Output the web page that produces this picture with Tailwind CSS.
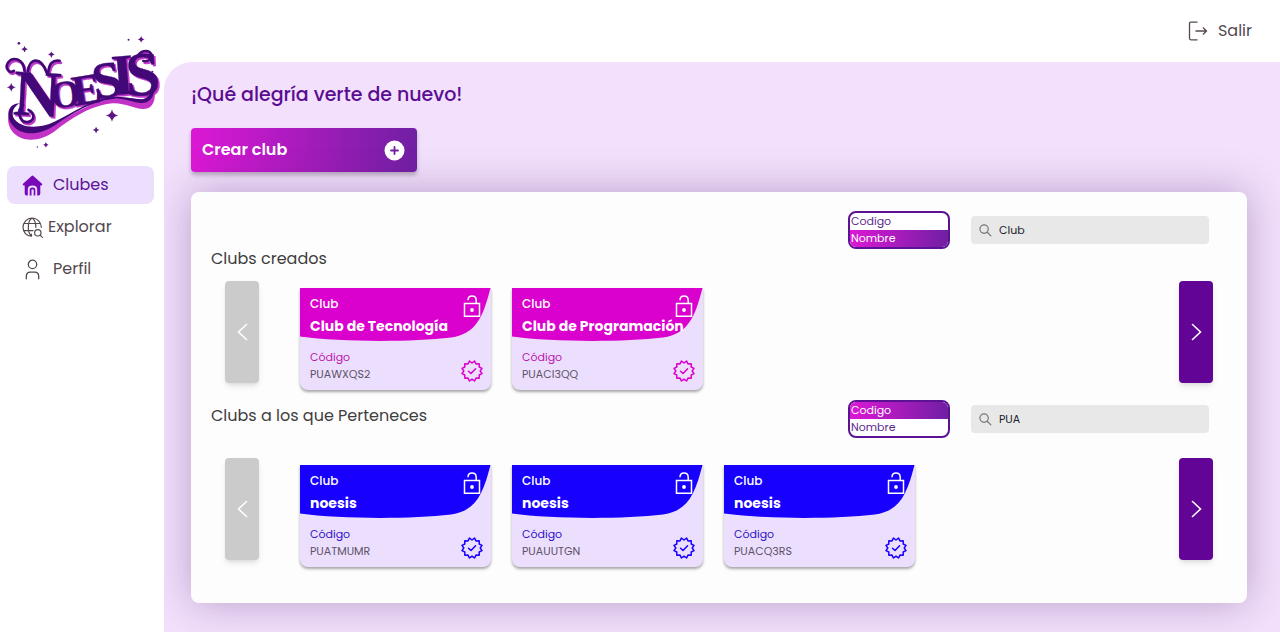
<!DOCTYPE html>
<html lang="es">
<head>
<meta charset="utf-8">
<meta name="viewport" content="width=device-width, initial-scale=1">
<title>Noesis - Clubes</title>
<script src="https://cdn.jsdelivr.net/npm/@tailwindcss/browser@4"></script>
</head>
<body class="flex min-h-screen bg-white font-['Poppins','Inter',sans-serif] text-[#54494f]">
<svg class="hidden" aria-hidden="true">
  <symbol id="lock" viewBox="0 0 18 24" fill="none" stroke="currentColor" stroke-width="1.5">
    <path d="M1.5 9.5H16.5V22.2H1.5ZM5 6.2C5 3.5 6.700 2 9 2S13.200 3.500 13.200 6.200V9.500"/>
    <circle cx="9" cy="16" r="1.900" fill="currentColor" stroke="none"/>
  </symbol>
  <symbol id="badge" viewBox="0 0 22 22" fill="none" stroke="currentColor" stroke-width="1.500" stroke-linejoin="round" stroke-linecap="round">
    <path d="M11 3 13.600 1 15 3.900 18.200 3.800 18.200 7 21 8.400 19.200 11 21 13.600 18.200 15 18.200 18.200 15 18.100 13.600 21 11 19.200 8.400 21 7 18.100 3.800 18.200 3.800 15 1 13.600 2.800 11 1 8.400 3.800 7 3.800 3.800 7 3.900 8.400 1Z"/>
    <path d="M7.500 11.200 10 13.500 14.600 8.800"/>
  </symbol>
  <symbol id="head" viewBox="0 0 191 53" preserveAspectRatio="none">
    <path fill="currentColor" d="M0 0H190.500C183 29 176 46 151 49.500C110 54.300 40 54 0 48.500Z"/>
  </symbol>
  <symbol id="search" viewBox="0 0 14 14" fill="none" stroke="currentColor" stroke-width="1.300" stroke-linecap="round">
    <circle cx="5.500" cy="5.500" r="4.500"/><path d="M8.900 8.900 12.800 12.800"/>
  </symbol>
  <symbol id="star" viewBox="-10 -10 20 20"><path d="M0-10Q1.500-1.500 10 0Q1.500 1.500 0 10Q-1.500 1.500-10 0Q-1.500-1.500 0-10Z"/></symbol>
</svg>

<aside class="w-[164px] shrink-0 pt-[30px]">
  <svg class="block h-[125px] w-full" viewBox="0 0 495 375" role="img" aria-label="Noesis">
    <defs>
      <g id="word" font-family="Liberation Serif, serif" font-weight="700">
        <text font-size="198" transform="translate(38 254) rotate(3)">N</text>
        <text font-size="116" transform="translate(156 236) rotate(-6)">O</text>
        <text font-size="130" transform="translate(224 228) rotate(-9)">E</text>
        <text font-size="158" transform="translate(288 210) rotate(-10)">S</text>
        <text font-size="176" transform="translate(342 196) rotate(-5)">I</text>
        <text font-size="188" transform="translate(382 198) rotate(-3)">S</text>
      </g>
      <g id="curl" fill="none" stroke-linecap="round">
        <path stroke-width="8" d="M42 122C28 132 14 114 24 98C38 78 70 84 74 122M84 124C88 82 124 78 140 126M146 126C148 100 160 88 180 92"/>
        <path stroke-width="8" d="M86 240C106 250 106 272 84 277C58 278 48 240 70 226"/>
        <path stroke-width="7" d="M432 92C450 96 464 84 456 70C446 56 422 62 414 80"/>
      </g>
    </defs>
    <g fill="#c23ac8" stroke="#c23ac8"><use href="#word" x="5" y="5" stroke-width="1"/><use href="#curl" x="4" y="6"/></g>
    <path fill="#c332c6" d="M40 240C20 250 20 280 36 304C62 340 122 338 166 304C214 266 274 226 340 220C382 218 410 242 444 236C464 230 470 206 466 184L456 200C440 218 412 202 358 204C276 210 208 260 160 288C98 322 38 300 34 258Z"/>
    <path fill="#420878" d="M60 220C24 220 16 256 36 284C66 322 120 316 166 286C216 252 276 212 346 206C386 204 416 228 444 216C464 206 468 184 462 164C458 192 444 208 426 208C396 206 374 198 334 202C270 210 216 252 164 276C114 300 56 294 40 262C34 244 44 228 60 220Z"/>
    <g fill="#420878" stroke="#420878"><use href="#word" stroke-width="1"/><use href="#curl"/></g>
    <g fill="#5b1685">
      <use href="#star" x="64" y="47" width="20" height="20"/><use href="#star" x="145" y="63" width="20" height="20"/>
      <use href="#star" x="415" y="16" width="22" height="22"/><use href="#star" x="20" y="158" width="28" height="28"/>
      <use href="#star" x="319" y="238" width="38" height="38"/><use href="#star" x="280" y="291" width="20" height="20"/>
      <use href="#star" x="130" y="337" width="17" height="17"/>
      <circle cx="57" cy="39" r="4"/><circle cx="388" cy="28" r="3"/><circle cx="460" cy="125" r="3"/><circle cx="113" cy="352" r="2"/>
    </g>
  </svg>
  <nav class="mt-[11px] flex flex-col gap-1 pr-[10px] pl-[7px] text-base" aria-label="Principal">
    <a href="#" aria-current="page" class="flex h-[38px] items-center gap-[10px] rounded-lg bg-[#ecdffd] pl-[15px] text-[#5b1394]">
      <svg class="h-[21px] w-[21px]" viewBox="0 0 21 21"><path fill="#7809b8" d="M9.300 1.200Q10.500 0 11.700 1.200L20 8.800Q21 10.300 19.200 10.500H18.300V18.500Q18.300 20.500 16.500 20.500H15.200V14.500Q15.200 10.600 10.500 10.600T5.800 14.500V20.500H4.500Q2.700 20.500 2.700 18.500V10.500H1.800Q0 10.300 1 8.800ZM7.700 20.500V14.500Q7.700 12.500 10.500 12.500T13.300 14.500V20.500H11.700V14.500H9.500V20.500Z"/></svg>
      Clubes
    </a>
    <a href="#" class="flex h-[38px] items-center gap-[5px] pl-[15px]">
      <svg class="h-[21px] w-[21px]" viewBox="0 0 21 21" fill="none" stroke="currentColor" stroke-width="1.200" stroke-linecap="round"><path d="M9.500 19.200C4.500 19.200 1 15.200 1 10.300S5 1 10 1S19 5 19.400 10.300M9.500 19.200C7.500 17.500 6.300 14 6.300 10.300S7.700 2.500 10 1C12.500 2.500 13.900 6 13.900 10.300M2.400 6.500H18M1.500 13.600H11M9.500 19.200V17"/><circle cx="15.800" cy="15.800" r="3.200"/><path d="M18.200 18.200 20.300 20.300"/></svg>
      Explorar
    </a>
    <a href="#" class="flex h-[38px] items-center gap-[10px] pl-[15px]">
      <svg class="h-[21px] w-[21px]" viewBox="0 0 21 21" fill="none" stroke="currentColor" stroke-width="1.300" stroke-linecap="round"><circle cx="10.500" cy="5.400" r="4.200"/><path d="M4.300 19.800V17.500Q4.300 13.200 8.300 13.200H12.700Q16.700 13.200 16.700 17.500V19.800"/></svg>
      Perfil
    </a>
  </nav>
</aside>

<div class="flex min-w-0 flex-1 flex-col">
  <header class="flex h-[62px] shrink-0 items-center justify-end pr-7">
    <a href="#" class="flex items-center gap-[10px] text-base">
      <svg class="h-5 w-5" viewBox="0 0 20 20" fill="none" stroke="currentColor" stroke-width="1.300"><path d="M9.500 1.200H3Q1.500 1.200 1.500 2.700V17.300Q1.500 18.800 3 18.800H9.500M7.500 10H18.500M15 6.500 18.500 10 15 13.500"/></svg>
      Salir
    </a>
  </header>
  <main class="flex-1 overflow-hidden rounded-tl-[28px] bg-[#f2e0fc] pt-[21px] pr-[33px] pb-7 pl-[27px]">
    <h1 class="text-[19px] leading-6 font-medium text-[#5a0d91]">¡Qué alegría verte de nuevo!</h1>
    <button type="button" class="mt-[21px] flex h-11 w-[226px] items-center justify-between rounded-[4px] bg-[linear-gradient(90deg,#dc18d5,#701fa3)] pr-3 pl-[11px] text-base font-semibold text-white shadow-[0_3px_4px_rgba(0,0,0,0.25)]">
      Crear club
      <svg class="h-[21px] w-[21px]" viewBox="0 0 21 21"><circle cx="10.500" cy="10.500" r="10" fill="#fff"/><path d="M10.500 7V14M7 10.500H14" stroke="#701fa3" stroke-width="1.800" stroke-linecap="round"/></svg>
    </button>

    <div class="mt-5 rounded-lg bg-[#fdfdfd] px-[34px] pt-[19px] pb-9 shadow-[0_0_40px_rgba(80,40,110,0.35)]">
      <section aria-labelledby="created">
        <div class="flex items-center justify-end gap-[21px] pr-1">
          <select size="2" aria-label="Filtrar clubs creados por" class="h-[38px] w-[102px] overflow-hidden rounded-lg border-2 border-[#5b1394] bg-white text-[11px] text-[#5b2a8c]">
            <option class="h-[17px] min-h-0 px-px py-0 leading-[17px]">Codigo</option>
            <option selected class="h-[17px] min-h-0 bg-[linear-gradient(90deg,#dc18d5,#701fa3)] px-px py-0 leading-[17px] text-white">Nombre</option>
          </select>
          <label class="flex h-7 w-[238px] items-center gap-[7px] rounded-[4px] bg-[#e8e8e8] pl-2 text-[#777]">
            <svg class="h-[13px] w-[13px] shrink-0"><use href="#search"/></svg>
            <input type="text" value="Club" aria-label="Buscar clubs creados" class="w-full bg-transparent text-[11px] text-[#18202a] outline-none">
          </label>
        </div>
        <h2 id="created" class="-ml-[14px] text-base leading-5 text-[#3e3e3e]">Clubs creados</h2>
        <div class="mt-3 flex items-start">
          <button type="button" disabled aria-label="Anterior" class="flex h-[102px] w-[34px] shrink-0 items-center justify-center rounded-[4px] bg-[#cbcbcb] shadow-md"><svg class="h-[18px] w-[11px]" viewBox="0 0 11 18" fill="none" stroke="#fff" stroke-width="1.600" stroke-linecap="round"><path d="M9.500 1.500 1.500 9 9.500 16.500"/></svg></button>
          <div class="mt-[7px] ml-[41px] flex flex-1 gap-[21px]">
            <article class="relative isolate h-[102px] w-[191px] rounded-b-lg bg-[#ecdffd] px-[10px] pt-[7px] text-[#da00cd] shadow-[0_2px_3px_rgba(0,0,0,0.35)]">
              <svg class="absolute inset-x-0 top-0 -z-10 h-[53px] w-full"><use href="#head"/></svg>
              <p class="text-xs leading-[18px] font-medium text-white">Club</p>
              <h3 class="mt-1 text-sm leading-[18px] font-bold whitespace-nowrap text-white">Club de Tecnología</h3>
              <p class="mt-[14px] text-[11px] leading-4 text-[#b914b0]">Código</p>
              <p class="text-[11px] leading-[18px] text-[#5c5268]">PUAWXQS2</p>
              <svg class="absolute top-[6px] right-[10px] h-6 w-[18px] text-white"><use href="#lock"/></svg>
              <svg class="absolute right-2 bottom-2 h-[22px] w-[22px]"><use href="#badge"/></svg>
            </article>
            <article class="relative isolate h-[102px] w-[191px] rounded-b-lg bg-[#ecdffd] px-[10px] pt-[7px] text-[#da00cd] shadow-[0_2px_3px_rgba(0,0,0,0.35)]">
              <svg class="absolute inset-x-0 top-0 -z-10 h-[53px] w-full"><use href="#head"/></svg>
              <p class="text-xs leading-[18px] font-medium text-white">Club</p>
              <h3 class="mt-1 text-sm leading-[18px] font-bold whitespace-nowrap text-white">Club de Programación</h3>
              <p class="mt-[14px] text-[11px] leading-4 text-[#b914b0]">Código</p>
              <p class="text-[11px] leading-[18px] text-[#5c5268]">PUACI3QQ</p>
              <svg class="absolute top-[6px] right-[10px] h-6 w-[18px] text-white"><use href="#lock"/></svg>
              <svg class="absolute right-2 bottom-2 h-[22px] w-[22px]"><use href="#badge"/></svg>
            </article>
          </div>
          <button type="button" aria-label="Siguiente" class="flex h-[102px] w-[34px] shrink-0 items-center justify-center rounded-[4px] bg-[#620597] shadow-md"><svg class="h-[18px] w-[11px]" viewBox="0 0 11 18" fill="none" stroke="#fff" stroke-width="1.600" stroke-linecap="round"><path d="M1.500 1.500 9.500 9 1.500 16.500"/></svg></button>
        </div>
      </section>

      <section aria-labelledby="member" class="mt-[10px]">
        <div class="flex gap-[21px] pr-1">
          <h2 id="member" class="-ml-[14px] flex-1 text-base leading-8 text-[#3e3e3e]">Clubs a los que Perteneces</h2>
          <select size="2" aria-label="Filtrar clubs a los que perteneces por" class="h-[38px] w-[102px] overflow-hidden rounded-lg border-2 border-[#5b1394] bg-white text-[11px] text-[#5b2a8c]">
            <option selected class="h-[17px] min-h-0 bg-[linear-gradient(90deg,#dc18d5,#701fa3)] px-px py-0 leading-[17px] text-white">Codigo</option>
            <option class="h-[17px] min-h-0 px-px py-0 leading-[17px]">Nombre</option>
          </select>
          <label class="flex h-7 w-[238px] items-center gap-[7px] self-center rounded-[4px] bg-[#e8e8e8] pl-2 text-[#777]">
            <svg class="h-[13px] w-[13px] shrink-0"><use href="#search"/></svg>
            <input type="text" value="PUA" aria-label="Buscar clubs a los que perteneces" class="w-full bg-transparent text-[11px] text-[#18202a] outline-none">
          </label>
        </div>
        <div class="mt-5 flex items-start">
          <button type="button" disabled aria-label="Anterior" class="flex h-[102px] w-[34px] shrink-0 items-center justify-center rounded-[4px] bg-[#cbcbcb] shadow-md"><svg class="h-[18px] w-[11px]" viewBox="0 0 11 18" fill="none" stroke="#fff" stroke-width="1.600" stroke-linecap="round"><path d="M9.500 1.500 1.500 9 9.500 16.500"/></svg></button>
          <div class="mt-[7px] ml-[41px] flex flex-1 gap-[21px]">
            <article class="relative isolate h-[102px] w-[191px] rounded-b-lg bg-[#ecdffd] px-[10px] pt-[7px] text-[#1800ff] shadow-[0_2px_3px_rgba(0,0,0,0.35)]">
              <svg class="absolute inset-x-0 top-0 -z-10 h-[53px] w-full"><use href="#head"/></svg>
              <p class="text-xs leading-[18px] font-medium text-white">Club</p>
              <h3 class="mt-1 text-sm leading-[18px] font-bold whitespace-nowrap text-white">noesis</h3>
              <p class="mt-[14px] text-[11px] leading-4 text-[#2b10c8]">Código</p>
              <p class="text-[11px] leading-[18px] text-[#5c5268]">PUATMUMR</p>
              <svg class="absolute top-[6px] right-[10px] h-6 w-[18px] text-white"><use href="#lock"/></svg>
              <svg class="absolute right-2 bottom-2 h-[22px] w-[22px]"><use href="#badge"/></svg>
            </article>
            <article class="relative isolate h-[102px] w-[191px] rounded-b-lg bg-[#ecdffd] px-[10px] pt-[7px] text-[#1800ff] shadow-[0_2px_3px_rgba(0,0,0,0.35)]">
              <svg class="absolute inset-x-0 top-0 -z-10 h-[53px] w-full"><use href="#head"/></svg>
              <p class="text-xs leading-[18px] font-medium text-white">Club</p>
              <h3 class="mt-1 text-sm leading-[18px] font-bold whitespace-nowrap text-white">noesis</h3>
              <p class="mt-[14px] text-[11px] leading-4 text-[#2b10c8]">Código</p>
              <p class="text-[11px] leading-[18px] text-[#5c5268]">PUAUUTGN</p>
              <svg class="absolute top-[6px] right-[10px] h-6 w-[18px] text-white"><use href="#lock"/></svg>
              <svg class="absolute right-2 bottom-2 h-[22px] w-[22px]"><use href="#badge"/></svg>
            </article>
            <article class="relative isolate h-[102px] w-[191px] rounded-b-lg bg-[#ecdffd] px-[10px] pt-[7px] text-[#1800ff] shadow-[0_2px_3px_rgba(0,0,0,0.35)]">
              <svg class="absolute inset-x-0 top-0 -z-10 h-[53px] w-full"><use href="#head"/></svg>
              <p class="text-xs leading-[18px] font-medium text-white">Club</p>
              <h3 class="mt-1 text-sm leading-[18px] font-bold whitespace-nowrap text-white">noesis</h3>
              <p class="mt-[14px] text-[11px] leading-4 text-[#2b10c8]">Código</p>
              <p class="text-[11px] leading-[18px] text-[#5c5268]">PUACQ3RS</p>
              <svg class="absolute top-[6px] right-[10px] h-6 w-[18px] text-white"><use href="#lock"/></svg>
              <svg class="absolute right-2 bottom-2 h-[22px] w-[22px]"><use href="#badge"/></svg>
            </article>
          </div>
          <button type="button" aria-label="Siguiente" class="flex h-[102px] w-[34px] shrink-0 items-center justify-center rounded-[4px] bg-[#620597] shadow-md"><svg class="h-[18px] w-[11px]" viewBox="0 0 11 18" fill="none" stroke="#fff" stroke-width="1.600" stroke-linecap="round"><path d="M1.500 1.500 9.500 9 1.500 16.500"/></svg></button>
        </div>
      </section>
    </div>
  </main>
</div>
</body>
</html>
